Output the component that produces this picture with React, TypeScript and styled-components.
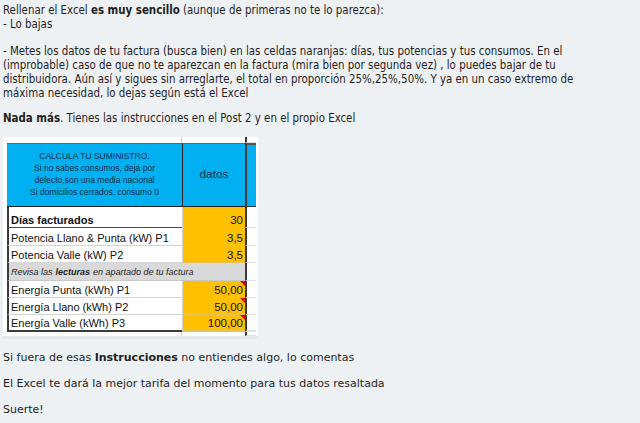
import * as React from 'react';
import styled, { createGlobalStyle, css } from 'styled-components';

const Global = createGlobalStyle`
  html, body {
    margin: 0;
    padding: 0;
    background: #eef1f4;
  }
`;

const Post = styled.div`
  padding: 4px 3px 0 3px;
  color: #1e1e1e;
`;

const Intro = styled.div`
  font-family: "DejaVu Sans Condensed", "DejaVu Sans", sans-serif;
  font-size: 11.4px;
  line-height: 13.8px;
  white-space: nowrap;
  p {
    margin: 0;
  }
  p + p {
    margin-top: 13.8px;
  }
  p:last-child {
    margin-top: 11px;
  }
`;

const Bottom = styled.p`
  font-family: "DejaVu Sans", Verdana, sans-serif;
  font-size: 11px;
  line-height: 14px;
  margin: 12px 0 0 0;
`;

const Frame = styled.div`
  margin-top: 12px;
  width: 250px;
  background: #fff;
  padding: 0 1px 0 4px;
  border-bottom: 3px solid #e4e8eb;
`;

const Sheet = styled.div`
  display: grid;
  grid-template-columns: 175px 63px 11px;
  grid-template-rows: 6px 64px 21px 18px 17px 18px 17px 17px 17px 4px;
  font-family: "Liberation Sans", Arial, sans-serif;
`;

const Cell = styled.div<{ $edge?: boolean; $last?: boolean; $strong?: boolean }>`
  box-sizing: border-box;
  border-bottom: 1px solid #d4d4d4;
  ${(p) => p.$edge && css`border-left: 2px solid #3a3a3a;`}
  ${(p) => p.$strong && css`border-bottom: 1px solid #4a4a4a;`}
  ${(p) => p.$last && css`border-bottom: 2px solid #3a3a3a;`}
`;

const Blank = styled(Cell)<{ $line?: boolean }>`
  border-bottom: none;
  ${(p) => p.$line && css`border-right: 1px solid #d4d4d4;`}
`;

const Edge = styled(Cell)<{ $blue?: boolean }>`
  border-left: 2px solid #3a3a3a;
  border-bottom-color: #e2e2e2;
  ${(p) => p.$blue && css`background: #00b0f0; border-top: 2px solid #555; border-bottom: 1px solid #3a3a3a;`}
`;

const Head = styled.div<{ $big?: boolean }>`
  box-sizing: border-box;
  background: #00b0f0;
  color: #102c4a;
  border-top: 1px solid #5a6a74;
  border-bottom: 1px solid #222;
  display: flex;
  align-items: center;
  justify-content: center;
  text-align: center;
  font-size: ${(p) => (p.$big ? '11.8px' : '8.5px')};
  line-height: 12px;
  padding-bottom: 3px;
  & + & {
    border-left: 1px solid #222;
  }
`;

const Label = styled(Cell)<{ $bold?: boolean }>`
  font-size: 11px;
  font-weight: ${(p) => (p.$bold ? 700 : 400)};
  color: #111;
  padding-left: 2px;
  white-space: nowrap;
  display: flex;
  align-items: flex-end;
  padding-bottom: 1px;
`;

const Value = styled(Cell)<{ $mark?: boolean }>`
  position: relative;
  background: #ffc000;
  font-size: 11.5px;
  color: #111;
  padding-right: 2px;
  display: flex;
  align-items: flex-end;
  justify-content: flex-end;
  padding-bottom: 1px;
  border-left: 1px solid #d4d4d4;
  border-bottom-color: #e6c25a;
  ${(p) =>
    p.$mark &&
    css`
      &::after {
        content: '';
        position: absolute;
        top: 0;
        right: 0;
        border-top: 5px solid #e00000;
        border-left: 5px solid transparent;
      }
    `}
`;

const Note = styled(Cell)`
  grid-column: span 2;
  background: #d9d9d9;
  font-size: 9px;
  font-style: italic;
  color: #222;
  padding-left: 2px;
  white-space: nowrap;
  display: flex;
  align-items: center;
  border-bottom-color: #c8c8c8;
  b {
    margin: 0 3px;
  }
`;

type Row = { label: string; value: string; bold?: boolean; mark?: boolean };

const upper: Row[] = [
  { label: 'Días facturados', value: '30', bold: true },
  { label: 'Potencia Llano & Punta (kW) P1', value: '3,5' },
  { label: 'Potencia Valle (kW) P2', value: '3,5' },
];

const lower: Row[] = [
  { label: 'Energía Punta (kWh) P1', value: '50,00', mark: true },
  { label: 'Energía Llano (kWh) P2', value: '50,00', mark: true },
  { label: 'Energía Valle (kWh) P3', value: '100,00', mark: true },
];

const renderRow = (r: Row, last = false) => (
  <React.Fragment key={r.label}>
    <Label $edge $bold={r.bold} $strong={r.bold} $last={last}>{r.label}</Label>
    <Value $mark={r.mark} $strong={r.bold} $last={last}>{r.value}</Value>
    <Edge $last={last} />
  </React.Fragment>
);

export default function App() {
  return (
    <>
      <Global />
      <Post>
        <Intro>
          <p>
            Rellenar el Excel <b>es muy sencillo</b> (aunque de primeras no te lo parezca):
            <br />- Lo bajas
          </p>
          <p>
            - Metes los datos de tu factura (busca bien) en las celdas naranjas: días, tus potencias y tus consumos. En el
            <br />
            (improbable) caso de que no te aparezcan en la factura (mira bien por segunda vez) , lo puedes bajar de tu
            <br />
            distribuidora. Aún así y sigues sin arreglarte, el total en proporción 25%,25%,50%. Y ya en un caso extremo de
            <br />
            máxima necesidad, lo dejas según está el Excel
          </p>
          <p>
            <b>Nada más</b>. Tienes las instrucciones en el Post 2 y en el propio Excel
          </p>
        </Intro>

        <Frame>
          <Sheet>
            <Blank $line />
            <Blank />
            <Edge />
            <Head>
              CALCULA TU SUMINISTRO.
              <br />
              Si no sabes consumos, deja por
              <br />
              defecto,son una media nacional
              <br />
              Si domicilios cerrados, consumo 0
            </Head>
            <Head $big>datos</Head>
            <Edge $blue />
            {upper.map((r) => renderRow(r))}
            <Note $edge>
              Revisa las<b>lecturas</b>en apartado de tu factura
            </Note>
            <Edge />
            {lower.map((r, i) => renderRow(r, i === lower.length - 1))}
            <Blank $line />
            <Blank />
            <Edge />
          </Sheet>
        </Frame>

        <Bottom>
          Si fuera de esas <b>Instrucciones</b> no entiendes algo, lo comentas
        </Bottom>
        <Bottom>El Excel te dará la mejor tarifa del momento para tus datos resaltada</Bottom>
        <Bottom>Suerte!</Bottom>
      </Post>
    </>
  );
}
